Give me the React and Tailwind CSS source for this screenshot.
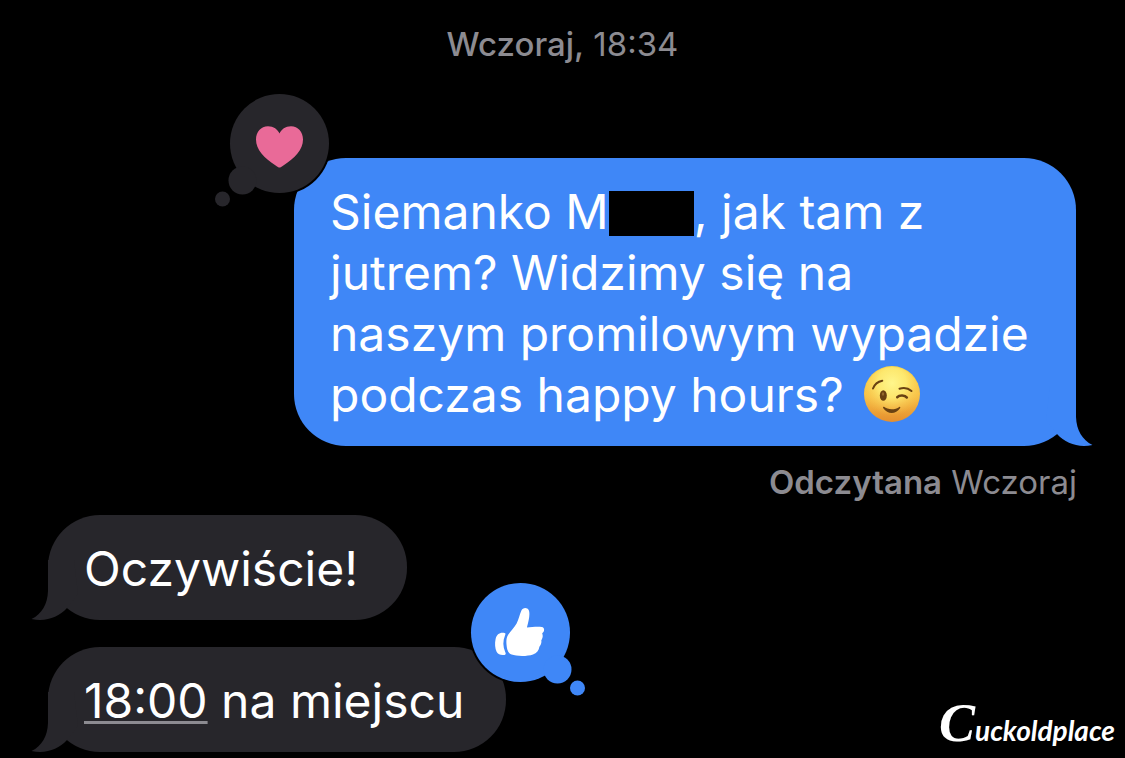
import React from "react";

function Tail({ side }) {
  const sent = side === "right";
  return (
    <svg
      aria-hidden="true"
      viewBox="1046 386 48 60"
      className={
        sent
          ? "absolute bottom-0 -right-[18px] h-[60px] w-12 text-[#3f87f7]"
          : "absolute bottom-0 -left-[18px] h-[60px] w-12 -scale-x-100 text-[#27262b]"
      }
    >
      <path
        fill="currentColor"
        d="M1050 386H1076V417C1076.500 430 1082 440 1092.500 445Q1088 446 1084 446C1073 445.800 1064 441.500 1057 434L1046 420Z"
      />
    </svg>
  );
}

function HeartReaction() {
  return (
    <svg
      role="img"
      aria-label="Serce"
      viewBox="212 90 120 120"
      className="absolute -left-[82px] -top-[68px] size-[120px]"
    >
      <circle cx="279.500" cy="143.500" r="51.500" fill="#000" />
      <g fill="#27262b">
        <circle cx="279.500" cy="143.500" r="49.500" />
        <circle cx="242.500" cy="180.500" r="14" />
        <circle cx="222.500" cy="199" r="7.500" />
      </g>
      <path
        fill="#e96a98"
        d="M279.500 167.500C278.500 167.500 277.500 166.800 276 165.700C264 158 256 149.500 256 139.500C256 132 261 126.200 268 126.200C273.500 126.200 277.800 129.300 279.500 133.500C281.200 129.300 285.500 126.200 291 126.200C298 126.200 303 132 303 139.500C303 149.500 295 158 283 165.700C281.500 166.800 280.500 167.500 279.500 167.500Z"
      />
    </svg>
  );
}

function ThumbReaction() {
  return (
    <svg
      role="img"
      aria-label="Kciuk w górę"
      viewBox="468 580 120 120"
      className="absolute -right-[82px] -top-[67px] size-[120px]"
    >
      <circle cx="520.500" cy="632.500" r="51.500" fill="#000" />
      <g fill="#3f87f7">
        <circle cx="520.500" cy="632.500" r="49.500" />
        <circle cx="557.500" cy="669.500" r="14" />
        <circle cx="577.500" cy="688" r="7.500" />
      </g>
      <g fill="#fff">
        <path d="M504.500 633C499.500 632.200 496.800 634.500 495.600 639C494.600 643.500 495 648.500 496.600 651.800C498 654.600 501.500 655.600 504.600 654.900C506 654.500 506 653.500 505.200 652C502.800 646.500 502.800 641 505 635.600C505.600 634 505.800 633.300 504.500 633Z" />
        <path d="M508.300 634.500C511 630.500 514.500 627.500 516.600 623.500C518.800 619.200 519.600 614.500 521.300 610.800C522.800 607.300 527.300 607.100 528.900 610.500C530.200 614 528.800 620.500 526.900 627.400C531.500 627.100 537.500 626.500 541.800 627C544.800 627.400 544.800 631.300 542.200 633.200C543 635.500 543 637.800 541.300 640.200C541.700 642.600 541 645 539.400 646.800C539 650.500 536.700 653.400 533 654.500C527.500 656.500 516.500 656.400 511.600 654.600C507.600 653 506.900 649 506.500 644.500C506.200 640.500 506.300 637.500 508.300 634.500Z" />
      </g>
    </svg>
  );
}

function WinkEmoji() {
  return (
    <svg
      role="img"
      aria-label="😉"
      viewBox="0 0 56 56"
      className="ml-[7px] inline-block size-14 align-[-10px]"
    >
      <defs>
        <linearGradient id="wink-base" x1="0" y1="0" x2="0" y2="1">
          <stop offset="0" stopColor="#fbd84b" />
          <stop offset="0.55" stopColor="#f7bf45" />
          <stop offset="1" stopColor="#e58e2e" />
        </linearGradient>
        <radialGradient id="wink-light" cx="0.5" cy="0.3" r="0.6">
          <stop offset="0" stopColor="#fff68c" />
          <stop offset="0.45" stopColor="#fdea72" stopOpacity="0.9" />
          <stop offset="1" stopColor="#f9c64e" stopOpacity="0" />
        </radialGradient>
      </defs>
      <circle cx="28" cy="28" r="28" fill="url(#wink-base)" />
      <circle cx="28" cy="28" r="27" fill="url(#wink-light)" />
      <ellipse cx="19.300" cy="29.500" rx="3.500" ry="5.300" fill="#694112" />
      <ellipse cx="19" cy="28" rx="1.200" ry="1.800" fill="#946a2e" />
      <g fill="none" stroke="#694112" strokeLinecap="round">
        <path strokeWidth="2" d="M9 22.500C10.500 18.500 13.500 15.800 18.300 14.800" />
        <path strokeWidth="2" d="M35.500 22.700C39.500 21.300 44 21.900 47.500 25" />
        <path strokeWidth="2.600" d="M33.300 31.200C35.500 28.700 41 28.900 42.800 31.500" />
      </g>
      <path
        fill="#694112"
        d="M20 40.800C23.500 44 31.500 44.200 35.300 40.900C36.300 40.500 36.600 41.400 36 42.300C32 48.500 23.500 48.600 19.300 42.300C18.700 41.200 19.200 40.300 20 40.800Z"
      />
    </svg>
  );
}

function Bubble({ side, children, className = "" }) {
  const tone =
    side === "right"
      ? "self-end bg-[#3f87f7] mr-px"
      : "self-start bg-[#27262b]";
  return (
    <div
      className={`relative max-w-full rounded-[52px] px-9 pb-[21px] pt-[23px] text-[48px] leading-[61px] text-white ${tone} ${className}`}
    >
      <Tail side={side} />
      {children}
    </div>
  );
}

export default function App() {
  return (
    <main
      lang="pl"
      className="relative flex min-h-screen flex-col bg-black px-12 pb-[6px] pt-6 font-['Inter',sans-serif]"
    >
      <p className="text-center text-[33px] leading-10 text-[#8c8b91]">
        <span className="font-medium">Wczoraj,</span> <time>18:34</time>
      </p>

      <Bubble side="right" className="mt-[94px] w-[782px]">
        <HeartReaction />
        <p>
          Siemanko M
          <span className="inline-block h-[45px] w-[85px] bg-black align-[-7px]" />
          , jak tam z<br />
          jutrem? Widzimy się na
          <br />
          naszym promilowym wypadzie
          <br />
          podczas happy hours? <WinkEmoji />
        </p>
      </Bubble>
      <p className="mt-4 text-right text-[33px] leading-10 text-[#8c8b91]">
        <span className="font-semibold">Odczytana</span> Wczoraj
      </p>

      <Bubble side="left" className="mt-[13px]">
        <p className="whitespace-pre-wrap">{"Oczywiście!\u00a0"}</p>
      </Bubble>
      <Bubble side="left" className="mt-[27px] min-w-[458px]">
        <ThumbReaction />
        <p>
          <a
            href="#18-00"
            className="underline decoration-[#8c8b91] decoration-[3px] underline-offset-[3px]"
          >
            18:00
          </a>{" "}
          na miejscu
        </p>
      </Bubble>

      <div className="absolute bottom-2 right-[10px] flex items-baseline font-['Lato',sans-serif] text-[28px] font-bold italic leading-10 text-white">
        <span className="font-['Liberation_Serif',serif] text-[54px]">C</span>
        <span>uckoldplace</span>
      </div>
    </main>
  );
}
